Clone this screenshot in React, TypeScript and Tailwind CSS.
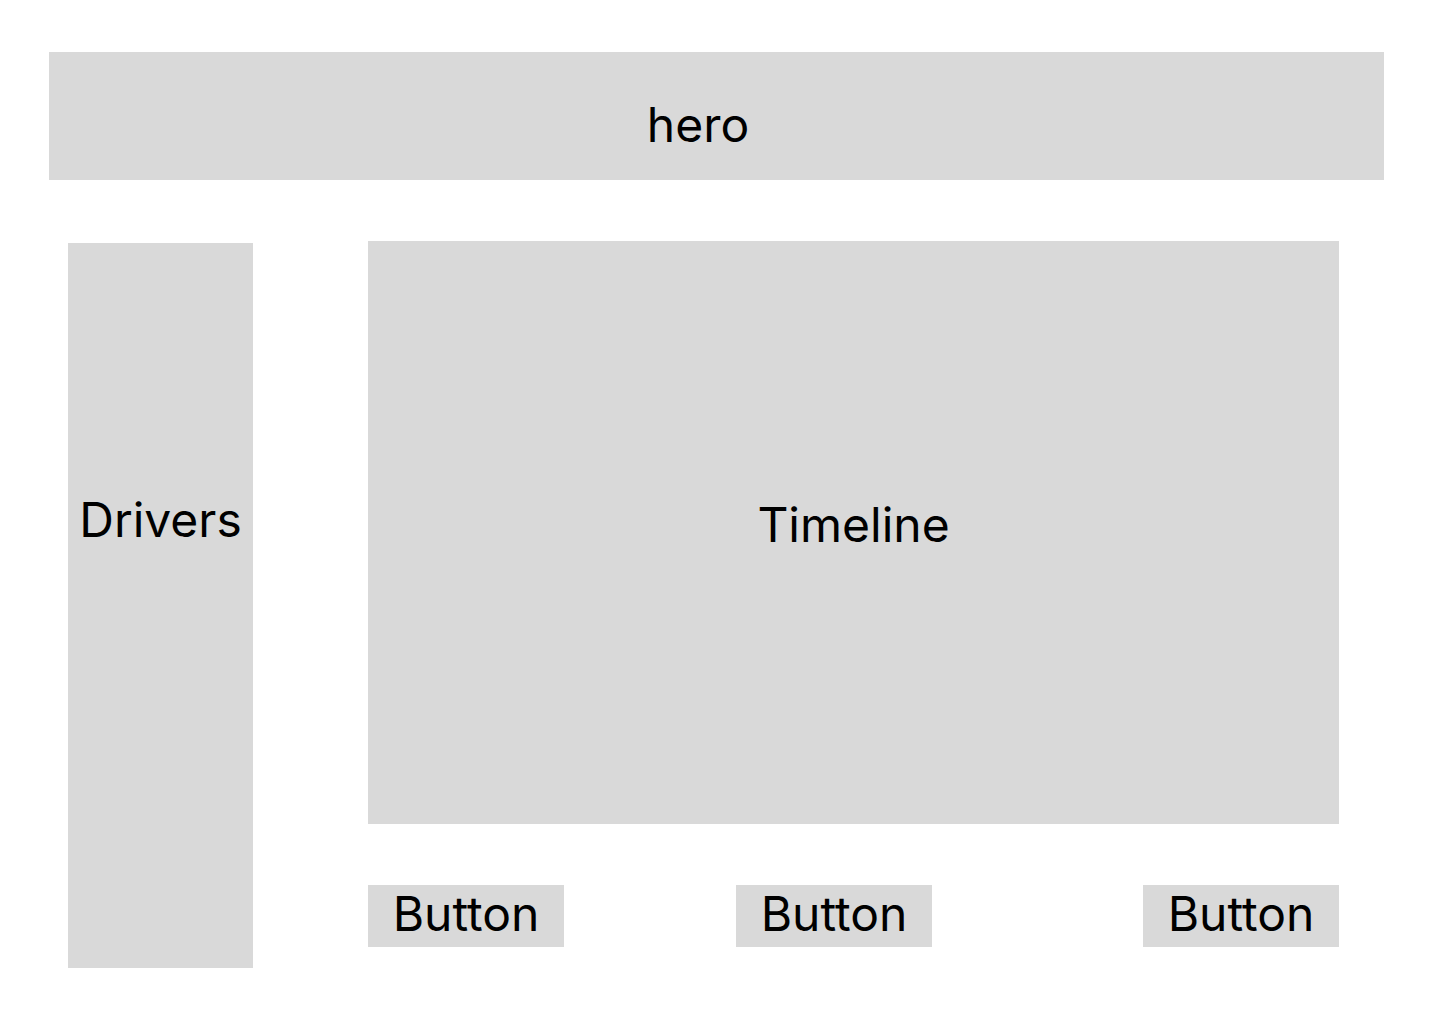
import React from "react";

export default function App() {
  return (
    <div
      className="w-[1440px] h-[1024px] bg-white text-black overflow-hidden"
      style={{ fontFamily: "Inter, 'Noto Sans', sans-serif" }}
    >
      <div className="ml-[49px] mt-[52px] w-[1335px] h-[128px] bg-[#d9d9d9] flex justify-center pr-[37px] pt-[43.5px]">
        <span className="text-[48px] leading-[58px] h-[58px]">hero</span>
      </div>
      <div className="flex items-start pl-[68px] mt-[61px]">
        <div className="mt-[2px] w-[185px] h-[725px] bg-[#d9d9d9] flex justify-center pt-[247.5px]">
          <span className="text-[48px] leading-[58px] h-[58px]">Drivers</span>
        </div>
        <div className="ml-[115px] w-[971px] flex flex-col">
          <div className="h-[583px] bg-[#d9d9d9] flex justify-center pt-[254.5px]">
            <span className="text-[48px] leading-[58px] h-[58px]">Timeline</span>
          </div>
          <div className="mt-[61px] flex">
            <div className="w-[196px] h-[62px] bg-[#d9d9d9] flex justify-center">
              <span className="text-[48px] leading-[58px]">Button</span>
            </div>
            <div className="ml-[172px] w-[196px] h-[62px] bg-[#d9d9d9] flex justify-center">
              <span className="text-[48px] leading-[58px]">Button</span>
            </div>
            <div className="ml-auto w-[196px] h-[62px] bg-[#d9d9d9] flex justify-center">
              <span className="text-[48px] leading-[58px]">Button</span>
            </div>
          </div>
        </div>
      </div>
    </div>
  );
}
